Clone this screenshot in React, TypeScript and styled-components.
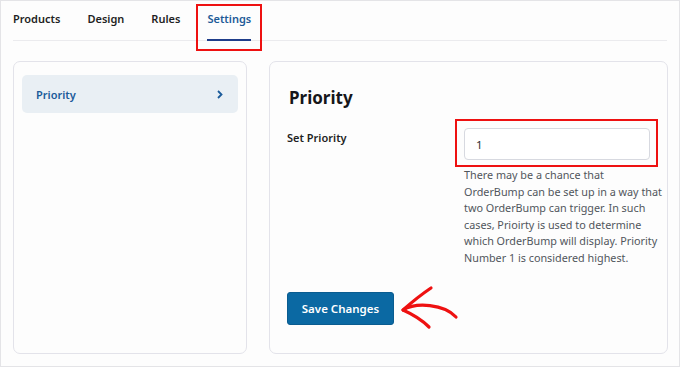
import React from "react";
import styled, { createGlobalStyle } from "styled-components";

const Global = createGlobalStyle`
  html, body { margin: 0; padding: 0; background: #ffffff; }
  body { font-family: "Noto Sans", "Open Sans", sans-serif; }
  * { box-sizing: border-box; }
`;

const Frame = styled.div`
  width: 680px;
  height: 367px;
  border: 1px solid #e4e4e7;
  background: #fdfdfd;
  padding: 0 12px 12px 12px;
  display: flex;
  flex-direction: column;
`;

const TabBar = styled.div`
  height: 40px;
  border-bottom: 1px solid #ebebee;
  display: flex;
  align-items: stretch;
  gap: 27px;
`;

const Tab = styled.div<{ $active?: boolean }>`
  position: relative;
  display: flex;
  align-items: center;
  padding-bottom: 3px;
  font-size: 11px;
  font-weight: 600;
  color: ${(p) => (p.$active ? "#1d5b98" : "#1f1f24")};
  border-bottom: 2px solid ${(p) => (p.$active ? "#1f3d8a" : "transparent")};
  margin-bottom: -1px;
`;

const Highlight = styled.span<{ $t: number; $r: number; $b: number; $l: number }>`
  position: absolute;
  top: ${(p) => p.$t}px;
  right: ${(p) => p.$r}px;
  bottom: ${(p) => p.$b}px;
  left: ${(p) => p.$l}px;
  border: 2px solid #ee1111;
  pointer-events: none;
`;

const Columns = styled.div`
  flex: 1;
  margin-top: 20px;
  display: grid;
  grid-template-columns: 234px 399px;
  gap: 22px;
`;

const Card = styled.div`
  background: #fdfdfd;
  border: 1px solid #e3e3ea;
  border-radius: 7px;
`;

const SideCard = styled(Card)`
  padding: 13px 8px;
`;

const SideItem = styled.div`
  height: 38px;
  border-radius: 5px;
  background: #e9eff4;
  display: flex;
  align-items: center;
  justify-content: space-between;
  padding: 0 15px 0 14px;
  font-size: 11px;
  font-weight: 600;
  color: #1b5b9a;
`;

const MainCard = styled(Card)`
  padding: 24px 17px 0 17px;
`;

const Heading = styled.h2`
  margin: 0 0 0 2px;
  font-size: 17px;
  font-weight: 700;
  color: #16161a;
  line-height: 24px;
`;

const FieldRow = styled.div`
  margin-top: 20px;
  display: grid;
  grid-template-columns: 177px 186px;
`;

const Label = styled.div`
  font-size: 11px;
  font-weight: 600;
  color: #1f1f24;
  line-height: 16px;
`;

const InputWrap = styled.div`
  position: relative;
  height: 32px;
  margin-top: -2px;
`;

const Input = styled.input`
  width: 100%;
  height: 32px;
  border: 1px solid #d7d9e0;
  border-radius: 4px;
  background: #ffffff;
  padding: 0 11px;
  font-family: "Noto Sans", sans-serif;
  font-size: 11.5px;
  color: #2c2c30;
  outline: none;
`;

const Help = styled.div`
  grid-column: 2;
  margin-top: 7px;
  font-size: 10.8px;
  line-height: 16.6px;
  color: #51565c;
`;

const HelpLine = styled.div`
  white-space: nowrap;
`;

const ButtonRow = styled.div`
  margin-top: 25px;
  position: relative;
  display: flex;
  align-items: center;
`;

const SaveButton = styled.button`
  height: 33px;
  width: 107px;
  background: #0b69a3;
  border: 1px solid #0a5c90;
  border-radius: 3px;
  color: #ffffff;
  font-family: "Noto Sans", sans-serif;
  font-size: 11.5px;
  font-weight: 600;
  padding: 0;
`;

const Arrow = styled.svg`
  position: absolute;
  left: 107px;
  top: -8px;
`;

const Chevron = () => (
  <svg width="6" height="9" viewBox="0 0 6 9">
    <path d="M1 1 L4.5 4.5 L1 8" stroke="#1b5b9a" strokeWidth="1.8" fill="none" />
  </svg>
);

const helpLines = [
  "There may be a chance that",
  "OrderBump can be set up in a way that",
  "two OrderBump can trigger. In such",
  "cases, Prioirty is used to determine",
  "which OrderBump will display. Priority",
  "Number 1 is considered highest.",
];

export default function App() {
  return (
    <>
      <Global />
      <Frame>
        <TabBar>
          <Tab>Products</Tab>
          <Tab>Design</Tab>
          <Tab>Rules</Tab>
          <Tab $active>
            Settings
            <Highlight $t={3} $r={-11} $b={-12} $l={-11} />
          </Tab>
        </TabBar>
        <Columns>
          <SideCard>
            <SideItem>
              Priority
              <Chevron />
            </SideItem>
          </SideCard>
          <MainCard>
            <Heading>Priority</Heading>
            <FieldRow>
              <Label>Set Priority</Label>
              <InputWrap>
                <Input defaultValue="1" />
                <Highlight $t={-9} $r={-8} $b={-7} $l={-9} />
              </InputWrap>
              <Help>
                {helpLines.map((l) => (
                  <HelpLine key={l}>{l}</HelpLine>
                ))}
              </Help>
            </FieldRow>
            <ButtonRow>
              <SaveButton>Save Changes</SaveButton>
              <Arrow width="80" height="50" viewBox="0 0 80 50">
                <path
                  d="M9 26 C 22 18, 50 20, 62 33"
                  stroke="#ee1111"
                  strokeWidth="3.2"
                  fill="none"
                  strokeLinecap="round"
                />
                <path
                  d="M37 4 C 28 10, 18 18, 9 26 C 18 30, 28 36, 35 43"
                  stroke="#ee1111"
                  strokeWidth="3.2"
                  fill="none"
                  strokeLinecap="round"
                  strokeLinejoin="round"
                />
              </Arrow>
            </ButtonRow>
          </MainCard>
        </Columns>
      </Frame>
    </>
  );
}
